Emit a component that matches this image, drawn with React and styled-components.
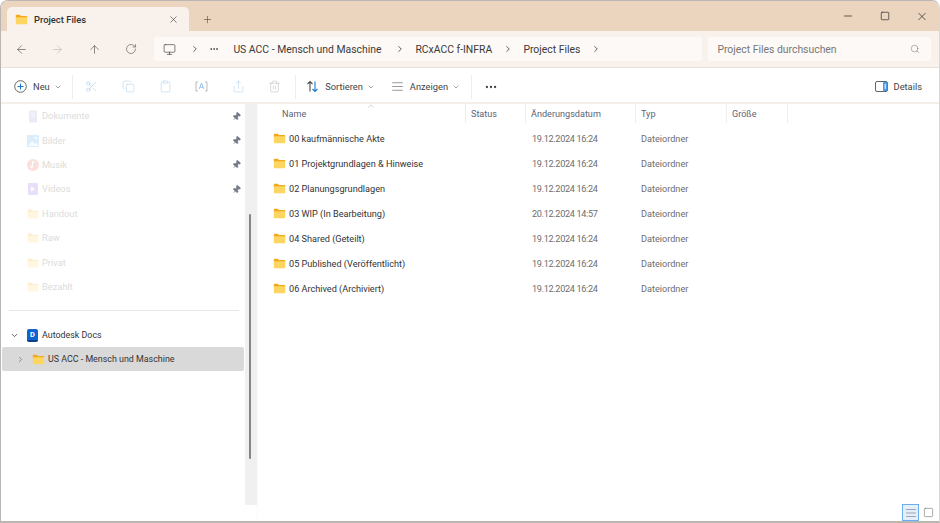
import styled, { createGlobalStyle } from "styled-components";
import {
  ArrowLeft,
  ArrowRight,
  ArrowUp,
  AlignJustify,
  ChevronDown,
  ChevronRight,
  ChevronUp,
  Clipboard,
  Copy,
  Ellipsis,
  Minus,
  Monitor,
  Pin,
  Plus,
  RotateCw,
  Scissors,
  Search,
  Share,
  Square,
  Trash2,
  X,
} from "lucide-react";

const files = [
  { name: "00 kaufmännische Akte", date: "19.12.2024 16:24" },
  { name: "01 Projektgrundlagen & Hinweise", date: "19.12.2024 16:24" },
  { name: "02 Planungsgrundlagen", date: "19.12.2024 16:24" },
  { name: "03 WIP (In Bearbeitung)", date: "20.12.2024 14:57" },
  { name: "04 Shared (Geteilt)", date: "19.12.2024 16:24" },
  { name: "05 Published (Veröffentlicht)", date: "19.12.2024 16:24" },
  { name: "06 Archived (Archiviert)", date: "19.12.2024 16:24" },
];

const columns = [
  { label: "Name", width: 208, pad: 24 },
  { label: "Status", width: 60, pad: 5 },
  { label: "Änderungsdatum", width: 110, pad: 5 },
  { label: "Typ", width: 91, pad: 5 },
  { label: "Größe", width: 61, pad: 5 },
];

const GlobalStyle = createGlobalStyle`
  html, body {
    margin: 0;
    padding: 0;
    background: #fff;
  }
  * {
    box-sizing: border-box;
  }
`;

const Window = styled.div`
  width: 940px;
  height: 523px;
  display: flex;
  flex-direction: column;
  overflow: hidden;
  background: #fff;
  border: 1px solid #b9b6b3;
  border-bottom-width: 2px;
  border-right-color: #d8d8d8;
  border-radius: 8px 8px 0 0;
  font-family: Roboto, "Open Sans", sans-serif;
  color: #333;
`;

const TitleBar = styled.div`
  height: 30px;
  flex: none;
  display: flex;
  align-items: flex-end;
  padding-left: 6px;
  background: #ecd5bf;
`;

const Tab = styled.div`
  width: 182px;
  height: 24px;
  display: flex;
  align-items: center;
  padding: 0 10px 0 8px;
  background: #f9f1eb;
  border-radius: 5px 5px 0 0;
  font-size: 9.4px;
  font-weight: 500;
`;

const TabTitle = styled.span`
  flex: 1;
  margin-left: 6px;
`;

const NewTab = styled.div`
  width: 37px;
  height: 24px;
  display: flex;
  align-items: center;
  justify-content: center;
  color: #4d4740;
`;

const WindowButtons = styled.div`
  margin-left: auto;
  height: 30px;
  display: flex;
  align-items: center;
  padding-right: 7px;
  gap: 17px;
  color: #2f2f2f;
  > * {
    width: 20px;
  }
`;

const NavBar = styled.div`
  height: 37px;
  flex: none;
  display: flex;
  align-items: center;
  background: #f9f1eb;
  border-bottom: 1px solid #e8e0d9;
  padding-left: 2px;
`;

const NavButton = styled.div`
  width: 36.6px;
  display: flex;
  justify-content: center;
  color: ${(p) => (p.$disabled ? "#bdb8b4" : "#55514d")};
`;

const AddressBar = styled.div`
  width: 548px;
  height: 24px;
  margin-left: 5px;
  display: flex;
  align-items: center;
  padding-left: 9px;
  background: #fdf9f6;
  border-radius: 3px;
  font-size: 10.4px;
  color: #3a3a3a;
`;

const Crumb = styled.span`
  width: ${(p) => p.$width}px;
  white-space: nowrap;
`;

const CrumbArrow = styled.span`
  width: ${(p) => p.$width ?? 34}px;
  display: flex;
  justify-content: center;
  padding-left: 4px;
  color: #444;
`;

const CrumbDots = styled(Ellipsis)`
  margin-right: 14px;
`;

const SearchBox = styled.div`
  width: 223px;
  height: 24px;
  margin-left: 6px;
  display: flex;
  align-items: center;
  justify-content: space-between;
  padding: 0 11px 0 9px;
  background: #fdf9f6;
  border-radius: 3px;
  font-size: 10.4px;
  color: #777;
`;

const Toolbar = styled.div`
  height: 36px;
  flex: none;
  display: flex;
  align-items: center;
  padding: 3px 0 0 13px;
  border-bottom: 2px solid #f4eee8;
  font-size: 9.3px;
  color: #444;
`;

const ToolLabel = styled.div`
  display: flex;
  align-items: center;
  gap: 6px;
  margin-left: ${(p) => p.$left ?? 0}px;
`;

const MenuCaret = styled(ChevronDown)`
  margin-left: -2px;
  color: #777;
`;

const ToolSep = styled.div`
  width: 1px;
  height: 24px;
  margin: 0 ${(p) => p.$right ?? 0}px 0 ${(p) => p.$left ?? 0}px;
  background: #eeeeee;
`;

const FadedTool = styled.div`
  width: 36.6px;
  display: flex;
  justify-content: center;
  opacity: 0.55;
  color: ${(p) => p.$color};
`;

const DetailsButton = styled(ToolLabel)`
  margin-left: auto;
  padding-right: 17px;
`;

const Body = styled.div`
  flex: 1;
  min-height: 0;
  display: flex;
`;

const Sidebar = styled.div`
  width: 243px;
  flex: none;
  padding-left: 1px;
`;

const SideRow = styled.div`
  height: 24.4px;
  display: flex;
  align-items: center;
  padding-left: 25px;
  padding-right: 2px;
  font-size: 9.3px;
  color: #dcdcdc;
`;

const SideIcon = styled.div`
  width: 15px;
  display: flex;
  opacity: 0.2;
`;

const SideLabel = styled.span`
  flex: 1;
  padding-bottom: 1px;
`;

const PinIcon = styled(Pin)`
  margin-right: 1px;
  color: #727c86;
  fill: #727c86;
  transform: rotate(40deg);
`;

const SideDivider = styled.div`
  height: 1px;
  margin: 11px 5px 12px 7px;
  background: #e6e6e6;
`;

const TreeRow = styled.div`
  height: 24px;
  display: flex;
  align-items: center;
  gap: ${(p) => p.$gap}px;
  padding-left: ${(p) => p.$indent}px;
  background: ${(p) => (p.$selected ? "#d9d9d9" : "transparent")};
  border-radius: 2px;
  font-size: 8.9px;
  color: #333;
`;

const TreeLabel = styled.span`
  padding-bottom: 1px;
`;

const TreeChevron = styled.span`
  display: flex;
  margin-right: 4px;
  color: ${(p) => p.$color};
`;

const DocsBadge = styled.div`
  width: 11px;
  height: 13px;
  display: flex;
  align-items: center;
  justify-content: center;
  background: #0f62d0;
  border-radius: 2px;
  border-bottom: 2px solid #0a3f8a;
  font-size: 7.5px;
  font-weight: 700;
  color: #fff;
`;

const ScrollTrack = styled.div`
  width: 12px;
  height: 401px;
  flex: none;
  margin-left: 1px;
  padding: 110px 0 0 4px;
  background: #f0f0f0;
`;

const ScrollThumb = styled.div`
  width: 2px;
  height: 245px;
  background: #858585;
  border-radius: 1px;
`;

const Main = styled.div`
  flex: 1;
  position: relative;
  border-left: 1px solid #fafafa;
`;

const SortCaret = styled(ChevronUp)`
  position: absolute;
  left: 108px;
  top: -3px;
  color: #9a9a9a;
`;

const HeaderRow = styled.div`
  height: 19px;
  margin-bottom: 3.5px;
  display: flex;
`;

const HeaderCell = styled.div`
  width: ${(p) => p.$width}px;
  padding-left: ${(p) => p.$pad}px;
  display: flex;
  align-items: center;
  border-right: 1px solid #eeeeee;
  font-size: 9.1px;
  color: #5b6478;
`;

const FileRow = styled.div`
  height: 24.95px;
  display: grid;
  grid-template-columns: 269px 109px 150px;
  align-items: center;
  font-size: 9.15px;
`;

const FileName = styled.div`
  display: flex;
  align-items: center;
  gap: 3px;
  padding-left: 15px;
  color: #333;
`;

const FileMeta = styled.div`
  padding-left: 5px;
  color: #6d6d6d;
`;

const FileDate = styled(FileMeta)`
  letter-spacing: -0.33px;
`;

const ViewSwitch = styled.div`
  position: absolute;
  right: 0;
  bottom: 0;
  display: flex;
  align-items: center;
  gap: 3px;
  padding-right: 5px;
`;

const ViewButton = styled.div`
  width: ${(p) => (p.$active ? 17 : 12)}px;
  height: 17px;
  display: flex;
  align-items: center;
  justify-content: center;
  border: ${(p) => (p.$active ? "1px solid #6aaef0" : "none")};
  background: ${(p) => (p.$active ? "#e3f0fb" : "transparent")};
  color: #6f6f6f;
`;

function FolderIcon({ size = 13 }) {
  return (
    <svg width={size} height={size} viewBox="0 0 16 16">
      <path d="M1 3.2C1 2.5 1.5 2 2.2 2h3.6l1.7 1.6H14c.6 0 1 .4 1 1V6H1z" fill="#f3a91f" />
      <path d="M1 5.2h14v7.5c0 .7-.5 1.2-1.2 1.2H2.2c-.7 0-1.2-.5-1.2-1.2z" fill="#fcd661" />
    </svg>
  );
}

function DocumentIcon() {
  return (
    <svg width="12" height="13" viewBox="0 0 12 13">
      <rect x="2" y="0.5" width="8" height="12" rx="1" fill="#8f9fc9" />
      <path d="M3.5 3h5M3.5 5h5M3.5 7h5" stroke="#e8ecf7" strokeWidth="0.8" />
    </svg>
  );
}

function PictureIcon() {
  return (
    <svg width="12" height="12" viewBox="0 0 12 12">
      <rect width="12" height="12" rx="1" fill="#4ea6ec" />
      <path d="M1 11l4-5 3 3 1.500-1.500L12 11z" fill="#e6f3fd" />
      <circle cx="9" cy="3" r="1.300" fill="#e6f3fd" />
    </svg>
  );
}

function MusicIcon() {
  return (
    <svg width="12" height="12" viewBox="0 0 12 12">
      <circle cx="6" cy="6" r="6" fill="#e96a5c" />
      <path d="M5.500 2.500v5M5.500 2.500L8 3.500" stroke="#fff" fill="none" />
      <circle cx="4.500" cy="8" r="1.200" fill="#fff" />
    </svg>
  );
}

function VideoIcon() {
  return (
    <svg width="12" height="12" viewBox="0 0 12 12">
      <rect x="1" width="10" height="12" rx="1" fill="#8d6be0" />
      <path d="M4 3.500l4 2.500-4 2.500z" fill="#fff" />
    </svg>
  );
}

function NewIcon() {
  return (
    <svg width="13" height="13" viewBox="0 0 13 13" fill="none">
      <circle cx="6.500" cy="6.500" r="5.800" stroke="#555" strokeWidth="0.9" />
      <path d="M6.500 3.500v6M3.500 6.500h6" stroke="#1a78d4" strokeWidth="1.100" />
    </svg>
  );
}

function RenameIcon() {
  return (
    <svg width="13" height="13" viewBox="0 0 13 13" fill="none" stroke="#6f7b86" strokeWidth="0.9">
      <path d="M3 2H1v9h2M10 2h2v9h-2" />
      <path d="M4.200 9l2.300-6 2.300 6M5 7.200h3" stroke="#2f86d8" />
    </svg>
  );
}

function SortIcon() {
  return (
    <svg width="13" height="13" viewBox="0 0 13 13" fill="none" strokeWidth="1.100">
      <path d="M4 11.500V1.500M1.500 4L4 1.500 6.500 4" stroke="#4a4a4a" />
      <path d="M9 1.500v10M6.500 9L9 11.500 11.500 9" stroke="#1a78d4" />
    </svg>
  );
}

function DetailsIcon() {
  return (
    <svg width="13" height="11" viewBox="0 0 13 11" fill="none">
      <rect x="0.500" y="0.500" width="12" height="10" rx="1.500" stroke="#5c6670" />
      <rect x="8" y="1" width="4.500" height="9" rx="1" fill="#4a9ae8" />
      <path d="M10.200 3v5" stroke="#fff" />
    </svg>
  );
}

const sideItems = [
  { label: "Dokumente", icon: <DocumentIcon />, pinned: true },
  { label: "Bilder", icon: <PictureIcon />, pinned: true },
  { label: "Musik", icon: <MusicIcon />, pinned: true },
  { label: "Videos", icon: <VideoIcon />, pinned: true },
  { label: "Handout" },
  { label: "Raw" },
  { label: "Privat" },
  { label: "Bezahlt" },
];

export default function App() {
  return (
    <>
      <GlobalStyle />
      <Window>
        <TitleBar>
          <Tab>
            <FolderIcon size={13} />
            <TabTitle>Project Files</TabTitle>
            <X size={11} strokeWidth={1.3} />
          </Tab>
          <NewTab>
            <Plus size={11} strokeWidth={1.3} />
          </NewTab>
          <WindowButtons>
            <Minus size={12} strokeWidth={1.5} />
            <Square size={10} strokeWidth={1.7} />
            <X size={13} strokeWidth={1.4} />
          </WindowButtons>
        </TitleBar>

        <NavBar>
          <NavButton><ArrowLeft size={13} strokeWidth={1.2} /></NavButton>
          <NavButton $disabled><ArrowRight size={13} strokeWidth={1.2} /></NavButton>
          <NavButton><ArrowUp size={13} strokeWidth={1.2} /></NavButton>
          <NavButton><RotateCw size={12} strokeWidth={1.2} /></NavButton>
          <AddressBar>
            <Monitor size={13} strokeWidth={1.2} />
            <CrumbArrow $width={33}><ChevronRight size={10} /></CrumbArrow>
            <CrumbDots size={10} />
            <Crumb $width={148}>US ACC - Mensch und Maschine</Crumb>
            <CrumbArrow><ChevronRight size={10} /></CrumbArrow>
            <Crumb $width={74}>RCxACC f-INFRA</Crumb>
            <CrumbArrow><ChevronRight size={10} /></CrumbArrow>
            <Crumb $width={54}>Project Files</Crumb>
            <CrumbArrow><ChevronRight size={10} /></CrumbArrow>
          </AddressBar>
          <SearchBox>
            <span>Project Files durchsuchen</span>
            <Search size={10} strokeWidth={1.3} />
          </SearchBox>
        </NavBar>

        <Toolbar>
          <ToolLabel>
            <NewIcon />
            <span>Neu</span>
            <MenuCaret size={8} />
          </ToolLabel>
          <ToolSep $left={10} $right={1} />
          <FadedTool $color="#4f9ee0"><Scissors size={13} strokeWidth={1} /></FadedTool>
          <FadedTool $color="#6fa8d8"><Copy size={13} strokeWidth={1} /></FadedTool>
          <FadedTool $color="#6fa8d8"><Clipboard size={13} strokeWidth={1} /></FadedTool>
          <FadedTool><RenameIcon /></FadedTool>
          <FadedTool $color="#6fa8d8"><Share size={13} strokeWidth={1} /></FadedTool>
          <FadedTool $color="#7d8790"><Trash2 size={13} strokeWidth={1} /></FadedTool>
          <ToolSep $left={2} $right={10} />
          <ToolLabel>
            <SortIcon />
            <span>Sortieren</span>
            <MenuCaret size={8} />
          </ToolLabel>
          <ToolLabel $left={16}>
            <AlignJustify size={13} strokeWidth={1} />
            <span>Anzeigen</span>
            <MenuCaret size={8} />
          </ToolLabel>
          <ToolSep $left={11} $right={12} />
          <Ellipsis size={14} strokeWidth={2} />
          <DetailsButton>
            <DetailsIcon />
            <span>Details</span>
          </DetailsButton>
        </Toolbar>

        <Body>
          <Sidebar>
            {sideItems.map((item) => (
              <SideRow key={item.label}>
                <SideIcon>{item.icon || <FolderIcon size={12} />}</SideIcon>
                <SideLabel>{item.label}</SideLabel>
                {item.pinned && <PinIcon size={9} />}
              </SideRow>
            ))}
            <SideDivider />
            <TreeRow $indent={8} $gap={4}>
              <TreeChevron><ChevronDown size={9} /></TreeChevron>
              <DocsBadge>D</DocsBadge>
              <TreeLabel>Autodesk Docs</TreeLabel>
            </TreeRow>
            <TreeRow $selected $indent={14} $gap={3}>
              <TreeChevron $color="#777"><ChevronRight size={9} /></TreeChevron>
              <FolderIcon size={13} />
              <TreeLabel>US ACC - Mensch und Maschine</TreeLabel>
            </TreeRow>
          </Sidebar>
          <ScrollTrack>
            <ScrollThumb />
          </ScrollTrack>
          <Main>
            <SortCaret size={10} strokeWidth={1} />
            <HeaderRow>
              {columns.map((col) => (
                <HeaderCell key={col.label} $width={col.width} $pad={col.pad}>
                  {col.label}
                </HeaderCell>
              ))}
            </HeaderRow>
            {files.map((file) => (
              <FileRow key={file.name}>
                <FileName>
                  <FolderIcon size={13} />
                  {file.name}
                </FileName>
                <FileDate>{file.date}</FileDate>
                <FileMeta>Dateiordner</FileMeta>
              </FileRow>
            ))}
            <ViewSwitch>
              <ViewButton $active><AlignJustify size={12} strokeWidth={1.2} /></ViewButton>
              <ViewButton><Square size={11} strokeWidth={1.3} /></ViewButton>
            </ViewSwitch>
          </Main>
        </Body>
      </Window>
    </>
  );
}
